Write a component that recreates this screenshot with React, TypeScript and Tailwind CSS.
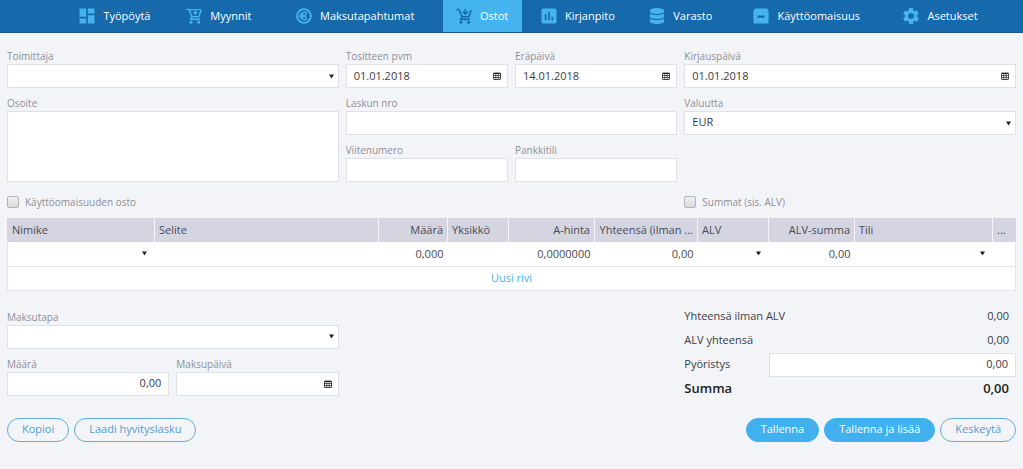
import { useId, type ReactNode } from "react";
import { FaDatabase } from "react-icons/fa";
import { MdAssessment, MdDashboard, MdSettings } from "react-icons/md";

function CartIcon({ arrow }: { arrow: "up" | "down" }) {
  return (
    <svg viewBox="0 0 16 16" className="size-4" fill="none" stroke="currentColor" strokeWidth="1.6">
      <path d="M0.5 1.5H3l3 7.2h6.8L15.2 2" />
      <path d="M6 8.7L4.6 11.4H14" />
      <circle cx="5" cy="14.3" r="1.5" fill="currentColor" stroke="none" />
      <circle cx="12.6" cy="14.3" r="1.5" fill="currentColor" stroke="none" />
      {arrow === "up" ? (
        <path d="M4 1.6h11M9.3 7V3.6M7.6 5.2L9.3 3.4l1.7 1.8" strokeWidth="1.4" />
      ) : (
        <path d="M9.3 1V5.6M6.8 3.6l2.5 2.5 2.5-2.5" strokeWidth="1.5" />
      )}
    </svg>
  );
}

function EuroIcon() {
  return (
    <svg viewBox="0 0 16 16" className="size-4" fill="none" stroke="currentColor">
      <circle cx="8" cy="8" r="6.9" strokeWidth="1.9" />
      <path d="M11.4 5.4a3.8 3.8 0 1 0 0 5.2M3.2 7h7.4M3.2 9h7.4" strokeWidth="1.4" />
    </svg>
  );
}

function BoxIcon() {
  return (
    <svg viewBox="0 0 16 16" className="size-4" fill="currentColor">
      <path
        fillRule="evenodd"
        d="M2 0.5h12L15.6 3v11a1.5 1.5 0 0 1-1.5 1.5H1.9A1.5 1.5 0 0 1 0.4 14V3ZM4.5 7.6v2.2h7V7.6Z"
      />
    </svg>
  );
}

function CalendarIcon() {
  return (
    <svg viewBox="0 0 8 8" className="size-2" fill="none" stroke="currentColor">
      <rect x="0.5" y="1" width="7" height="6.5" rx="0.5" strokeWidth="0.8" />
      <path d="M0.5 1.5h7" />
      <path d="M0.5 3.5h7M0.5 5.5h7M2.8 1.5v6M5.2 1.5v6" strokeWidth="0.7" />
    </svg>
  );
}

function Caret() {
  return (
    <svg viewBox="0 0 6 5" className="size-[5px]" fill="currentColor">
      <path d="M0 0h6L3 5z" />
    </svg>
  );
}

const navItems = [
  { label: "Työpöytä", icon: <MdDashboard className="size-5 -m-0.5" />, grow: "grow-[110]" },
  { label: "Myynnit", icon: <CartIcon arrow="up" />, grow: "grow-[98]" },
  { label: "Maksutapahtumat", icon: <EuroIcon />, grow: "grow-[175]" },
  { label: "Ostot", icon: <CartIcon arrow="down" />, grow: "grow-[79]", active: true },
  { label: "Kirjanpito", icon: <MdAssessment className="size-5 -m-0.5" />, grow: "grow-[113]" },
  { label: "Varasto", icon: <FaDatabase className="size-4" />, grow: "grow-[93]" },
  { label: "Käyttöomaisuus", icon: <BoxIcon />, grow: "grow-[159]" },
  { label: "Asetukset", icon: <MdSettings className="size-5 -m-0.5" />, grow: "grow-[109]" },
];

function Header() {
  return (
    <header className="border-b border-[#14588f] bg-[#1669aa]">
      <nav className="flex h-8 pl-15 pr-7">
        {navItems.map((item) => (
          <a
            key={item.label}
            href="#"
            className={`flex basis-0 items-center justify-center gap-2 whitespace-nowrap text-[11px] font-medium text-white ${item.grow} ${
              item.active ? "bg-[#45b3ee]" : ""
            }`}
          >
            <span className={item.active ? "text-[#1669aa]" : "text-[#45b3ee]"}>{item.icon}</span>
            {item.label}
          </a>
        ))}
      </nav>
    </header>
  );
}

const box =
  "block h-6 w-full rounded-none border border-[#dfe0e8] bg-white px-[7px] pb-0.5 text-[11px] text-[#3c3c44] outline-none";

function Field({ label, id, children }: { label: string; id: string; children: ReactNode }) {
  return (
    <div className="flex min-w-0 flex-col">
      <label htmlFor={id} className="h-4 text-[10px] leading-4 text-[#8f8f97]">
        {label}
      </label>
      {children}
    </div>
  );
}

function TextField({ label, value = "", right = false }: { label: string; value?: string; right?: boolean }) {
  const id = useId();
  return (
    <Field label={label} id={id}>
      <input id={id} type="text" defaultValue={value} className={`${box} ${right ? "text-right" : ""}`} />
    </Field>
  );
}

function DateField({ label, value = "" }: { label: string; value?: string }) {
  const id = useId();
  return (
    <Field label={label} id={id}>
      <div className="relative">
        <input id={id} type="text" defaultValue={value} className={box} />
        <button type="button" aria-label={label} className="absolute inset-y-0 right-[7px] text-[#222]">
          <CalendarIcon />
        </button>
      </div>
    </Field>
  );
}

function SelectField({ label, value = "" }: { label: string; value?: string }) {
  const id = useId();
  return (
    <Field label={label} id={id}>
      <div className="relative">
        <select id={id} className={`${box} appearance-none`}>
          <option>{value}</option>
        </select>
        <span className="pointer-events-none absolute inset-y-0 right-[5px] flex items-center text-[#222]">
          <Caret />
        </span>
      </div>
    </Field>
  );
}

function Check({ label }: { label: string }) {
  return (
    <label className="flex h-4 items-center gap-1.5 text-[10px] text-[#8f8f97]">
      <input
        type="checkbox"
        className="size-3 appearance-none rounded-xs border border-[#b4b4b8] bg-linear-to-b from-[#efefef] to-[#dcdcdc]"
      />
      {label}
    </label>
  );
}

function CellSelect({ label }: { label: string }) {
  return (
    <div className="relative">
      <select aria-label={label} className="block h-[22px] w-full appearance-none px-1 outline-none">
        <option></option>
      </select>
      <span className="pointer-events-none absolute inset-y-0 right-1 flex items-center text-[#222]">
        <Caret />
      </span>
    </div>
  );
}

const columns = [
  { label: "Nimike", width: "w-[147px]", select: true },
  { label: "Selite", width: "" },
  { label: "Määrä", width: "w-[69px]", value: "0,000", right: true },
  { label: "Yksikkö", width: "w-[61px]" },
  { label: "A-hinta", width: "w-[86px]", value: "0,0000000", right: true },
  { label: "Yhteensä (ilman ...", width: "w-[103px]", value: "0,00", right: true },
  { label: "ALV", width: "w-[71px]", select: true },
  { label: "ALV-summa", width: "w-[86px]", value: "0,00", right: true },
  { label: "Tili", width: "w-[138px]", select: true },
  { label: "...", width: "w-[23px]" },
];

function Rows() {
  return (
    <table className="w-full table-fixed border-collapse bg-white text-[11px] text-[#4a4a54]">
      <thead>
        <tr className="h-6 bg-[#d5d5e2]">
          {columns.map((col) => (
            <th
              key={col.label}
              className={`whitespace-nowrap border-l border-[#f3f4f8] px-1 font-normal first:border-[#d5d5e2] ${col.width} ${
                col.right ? "text-right" : "text-left"
              }`}
            >
              {col.label}
            </th>
          ))}
        </tr>
      </thead>
      <tbody>
        <tr className="h-6 border-x border-b border-[#e4e5ec]">
          {columns.map((col) => (
            <td key={col.label} className={`px-1 ${col.right ? "text-right" : ""}`}>
              {col.select ? <CellSelect label={col.label} /> : col.value}
            </td>
          ))}
        </tr>
        <tr className="h-6 border-x border-b border-[#e4e5ec]">
          <td colSpan={columns.length} className="text-center">
            <button type="button" className="block w-full font-medium text-[#4fabdf]">
              Uusi rivi
            </button>
          </td>
        </tr>
      </tbody>
    </table>
  );
}

function Totals() {
  return (
    <div className="flex flex-col text-[11px] text-[#3c3c44]">
      <div className="flex h-6 items-center justify-between pr-[7px]">
        <span>Yhteensä ilman ALV</span>
        <span>0,00</span>
      </div>
      <div className="flex h-6 items-center justify-between pr-[7px]">
        <span>ALV yhteensä</span>
        <span>0,00</span>
      </div>
      <div className="flex h-6 items-center">
        <label htmlFor="rounding" className="w-[85px]">
          Pyöristys
        </label>
        <input id="rounding" type="text" defaultValue="0,00" className={`${box} flex-1 text-right`} />
      </div>
      <div className="flex h-6 items-center justify-between pr-[7px] text-[13px] font-semibold text-[#222]">
        <span>Summa</span>
        <span>0,00</span>
      </div>
    </div>
  );
}

function Button({ primary = false, children }: { primary?: boolean; children: ReactNode }) {
  return (
    <button
      type="button"
      className={`h-6 whitespace-nowrap rounded-full border px-3.5 text-[11px] ${
        primary ? "border-[#40b1ee] bg-[#40b1ee] font-medium text-white" : "border-[#62acd6] text-[#4f9fd2]"
      }`}
    >
      {children}
    </button>
  );
}

export default function App() {
  return (
    <div className="min-h-screen bg-[#f3f4f8] font-['Open_Sans',sans-serif]">
      <Header />
      <main className="px-[7px] pt-[15px]">
        <div className="grid grid-cols-3 gap-x-[7px]">
          <div className="flex flex-col gap-[7px]">
            <SelectField label="Toimittaja" />
            <Field label="Osoite" id="address">
              <textarea
                id="address"
                className="h-[71px] w-full resize-none border border-[#dfe0e8] bg-white px-[7px] py-1 text-[11px] outline-none"
              />
            </Field>
          </div>
          <div className="flex flex-col gap-[7px]">
            <div className="grid grid-cols-2 gap-[7px]">
              <DateField label="Tositteen pvm" value="01.01.2018" />
              <DateField label="Eräpäivä" value="14.01.2018" />
            </div>
            <TextField label="Laskun nro" />
            <div className="grid grid-cols-2 gap-[7px]">
              <TextField label="Viitenumero" />
              <TextField label="Pankkitili" />
            </div>
          </div>
          <div className="flex flex-col gap-[7px]">
            <DateField label="Kirjauspäivä" value="01.01.2018" />
            <SelectField label="Valuutta" value="EUR" />
          </div>
        </div>

        <div className="grid grid-cols-3 gap-x-[7px] pt-3 pb-2">
          <Check label="Käyttöomaisuuden osto" />
          <div className="col-start-3">
            <Check label="Summat (sis. ALV)" />
          </div>
        </div>

        <Rows />

        <div className="grid grid-cols-3 gap-x-[7px] pt-3.5">
          <div className="flex flex-col gap-[7px] pt-1">
            <SelectField label="Maksutapa" />
            <div className="grid grid-cols-2 gap-[7px]">
              <TextField label="Määrä" value="0,00" right />
              <DateField label="Maksupäivä" />
            </div>
          </div>
          <div className="col-start-3">
            <Totals />
          </div>
        </div>

        <div className="flex justify-between pt-[17px] pb-4">
          <div className="flex gap-[5px]">
            <Button>Kopioi</Button>
            <Button>Laadi hyvityslasku</Button>
          </div>
          <div className="flex gap-[5px]">
            <Button primary>Tallenna</Button>
            <Button primary>Tallenna ja lisää</Button>
            <Button>Keskeytä</Button>
          </div>
        </div>
      </main>
    </div>
  );
}
